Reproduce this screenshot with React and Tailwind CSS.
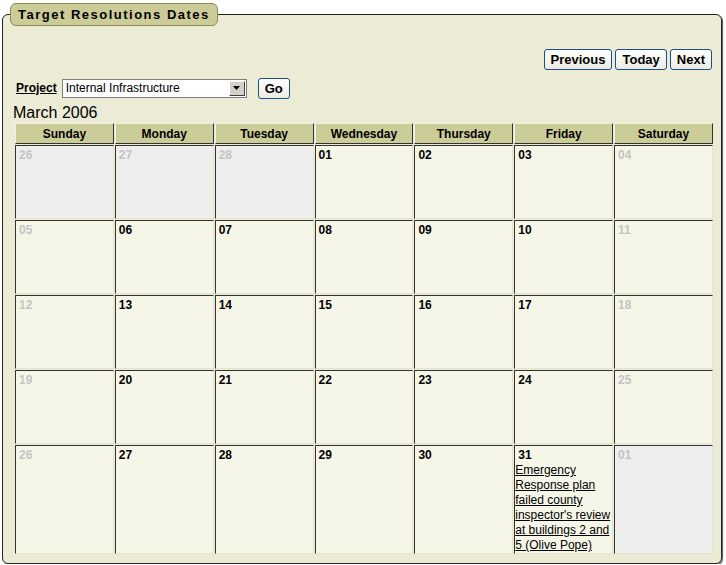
import React from "react";

const days = ["Sunday", "Monday", "Tuesday", "Wednesday", "Thursday", "Friday", "Saturday"];

// o = other month (grey cell), w = weekend (grey number)
const weeks = [
  [{ d: "26", o: true }, { d: "27", o: true }, { d: "28", o: true }, { d: "01" }, { d: "02" }, { d: "03" }, { d: "04", w: true }],
  [{ d: "05", w: true }, { d: "06" }, { d: "07" }, { d: "08" }, { d: "09" }, { d: "10" }, { d: "11", w: true }],
  [{ d: "12", w: true }, { d: "13" }, { d: "14" }, { d: "15" }, { d: "16" }, { d: "17" }, { d: "18", w: true }],
  [{ d: "19", w: true }, { d: "20" }, { d: "21" }, { d: "22" }, { d: "23" }, { d: "24" }, { d: "25", w: true }],
  [
    { d: "26", w: true },
    { d: "27" },
    { d: "28" },
    { d: "29" },
    { d: "30" },
    { d: "31", event: "Emergency Response plan failed county inspector's review at buildings 2 and 5 (Olive Pope)" },
    { d: "01", o: true },
  ],
];

const btn =
  "h-[21px] px-[6px] rounded-[3px] border border-[#1c4f86] bg-gradient-to-b from-white to-[#ecebe3] text-[13px] font-bold text-black leading-none";

export default function App() {
  return (
    <div className="pl-[2px] pt-[3px] font-['Liberation_Sans',Arial,sans-serif] text-black">
      <fieldset className="w-[720px] rounded-[6px] border border-[#222] bg-[#ebebd6] shadow-[1px_1px_1px_#555] p-0 m-0 min-w-0">
        <legend className="ml-[7px] h-[23px] px-[7px] rounded-[6px] border border-[#8c8c55] bg-[#cccc99] text-[13px] font-bold tracking-[1.5px] leading-[21px]">
          Target Resolutions Dates
        </legend>
        <div className="pl-[10px] pr-[8px] pt-[23px] pb-[8px]">
          <div className="flex justify-end gap-[3px] pr-[1px]">
            <button className={btn}>Previous</button>
            <button className={btn}>Today</button>
            <button className={btn}>Next</button>
          </div>

          <div className="flex items-center mt-[8px] h-[20px]">
            <span className="ml-[3px] text-[12px] font-bold underline">Project</span>
            <div className="ml-[5px] flex items-center w-[185px] h-[19px] border border-[#7f7f7f] bg-white">
              <span className="flex-1 pl-[3px] text-[12px] leading-none">Internal Infrastructure</span>
              <span className="mr-[1px] flex items-center justify-center w-[16px] h-[15px] bg-[#d4d0c8] border border-t-white border-l-white border-r-[#404040] border-b-[#404040]">
                <svg width="7" height="4" viewBox="0 0 7 4">
                  <path d="M0 0h7L3.5 4z" fill="#000" />
                </svg>
              </span>
            </div>
            <button className={btn + " ml-[11px] h-[20px]"}>Go</button>
          </div>

          <div className="mt-[6px] text-[16px] leading-[18px]">March 2006</div>

          <table className="ml-[1px] w-[700px] border-separate border-spacing-[1px] table-fixed">
            <thead>
              <tr>
                {days.map((d) => (
                  <th
                    key={d}
                    className="h-[21px] p-0 bg-[#cccc99] border border-t-[#f2f2e0] border-l-[#f2f2e0] border-r-[#333] border-b-[#333] text-[12px] font-bold text-center"
                  >
                    {d}
                  </th>
                ))}
              </tr>
            </thead>
            <tbody>
              {weeks.map((wk, i) => (
                <tr key={i}>
                  {wk.map((c, j) => (
                    <td
                      key={j}
                      className={
                        "align-top p-0 border border-t-[#333] border-l-[#333] border-r-[#e4e4d0] border-b-[#e4e4d0] " +
                        (i === 4 ? "h-[106px] " : "h-[74px] ") +
                        (c.o ? "bg-[#eeeeee]" : "bg-[#f6f6e8]")
                      }
                    >
                      <div
                        className={
                          "pl-[3px] pt-[2px] text-[12px] font-bold leading-[14px] " +
                          (c.o || c.w ? "text-[#c4c4c4]" : "text-black")
                        }
                      >
                        {c.d}
                      </div>
                      {c.event && (
                        <a href="#" className="block mt-[1px] text-[12px] leading-[15px] underline text-black">
                          {c.event}
                        </a>
                      )}
                    </td>
                  ))}
                </tr>
              ))}
            </tbody>
          </table>
        </div>
      </fieldset>
    </div>
  );
}
